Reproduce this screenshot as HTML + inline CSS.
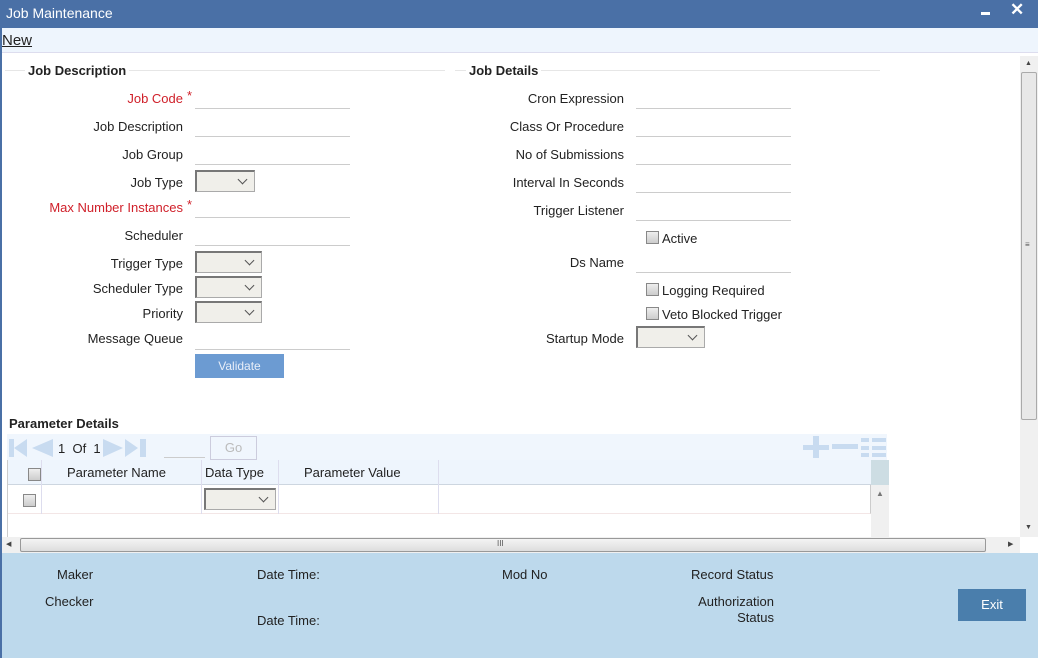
<!DOCTYPE html>
<html><head><style>
*{margin:0;padding:0;box-sizing:border-box}
body{width:1038px;height:658px;overflow:hidden;font-family:"Liberation Sans",Arial,sans-serif;font-size:13px;color:#222;background:#fff;position:relative}
.a{position:absolute}
.lbl{position:absolute;text-align:right;white-space:nowrap}
.red{color:#d0202a}
.fld{position:absolute;height:1px;background:#ccc}
.sel{position:absolute;height:22px;background:#f0efea;border:1px solid #aaa;border-top:2px solid #777;border-left:2px solid #777}
.sel:after{content:"";position:absolute;right:8px;top:4px;width:6px;height:6px;border-right:1.5px solid #555;border-bottom:1.5px solid #555;transform:rotate(45deg)}
.cb{position:absolute;width:13px;height:13px;border:1px solid #888;background:linear-gradient(#eee,#ccc)}
</style></head><body>
<div class="a" style="left:0;top:0;width:1038px;height:28px;background:#4a70a6"></div>
<div class="a" style="left:6px;top:5px;color:#fff;font-size:14px">Job Maintenance</div>
<div class="a" style="left:981px;top:12px;width:9px;height:3px;background:#fff"></div>
<div class="a" style="left:1010px;top:0;color:#fff;font-size:17px;font-weight:bold">✕</div>
<div class="a" style="left:0;top:28px;width:2px;height:630px;background:#4a70a6"></div>
<div class="a" style="left:2px;top:28px;width:1036px;height:25px;background:#eef5fd;border-bottom:1px solid #dde"></div>
<div class="a" style="left:2px;top:32px;font-size:15px;text-decoration:underline">New</div>

<div class="a" style="left:5px;top:70px;width:440px;height:1px;background:#e6e6e6"></div>
<div class="a" style="left:25px;top:63px;background:#fff;padding:0 3px;font-weight:bold;font-size:13px">Job Description</div>
<div class="a" style="left:455px;top:70px;width:425px;height:1px;background:#e6e6e6"></div>
<div class="a" style="left:466px;top:63px;background:#fff;padding:0 3px;font-weight:bold;font-size:13px">Job Details</div>

<div class="lbl red" style="right:855px;top:91px">Job Code</div><div class="a red" style="left:187px;top:88px">*</div>
<div class="fld" style="left:195px;top:108px;width:155px"></div>
<div class="lbl" style="right:855px;top:119px">Job Description</div><div class="fld" style="left:195px;top:136px;width:155px"></div>
<div class="lbl" style="right:855px;top:147px">Job Group</div><div class="fld" style="left:195px;top:164px;width:155px"></div>
<div class="lbl" style="right:855px;top:175px">Job Type</div><div class="sel" style="left:195px;top:170px;width:60px"></div>
<div class="lbl red" style="right:855px;top:200px">Max Number Instances</div><div class="a red" style="left:187px;top:197px">*</div>
<div class="fld" style="left:195px;top:217px;width:155px"></div>
<div class="lbl" style="right:855px;top:228px">Scheduler</div><div class="fld" style="left:195px;top:245px;width:155px"></div>
<div class="lbl" style="right:855px;top:256px">Trigger Type</div><div class="sel" style="left:195px;top:251px;width:67px"></div>
<div class="lbl" style="right:855px;top:281px">Scheduler Type</div><div class="sel" style="left:195px;top:276px;width:67px"></div>
<div class="lbl" style="right:855px;top:306px">Priority</div><div class="sel" style="left:195px;top:301px;width:67px"></div>
<div class="lbl" style="right:855px;top:331px">Message Queue</div><div class="fld" style="left:195px;top:349px;width:155px"></div>
<div class="a" style="left:195px;top:354px;width:89px;height:24px;background:#6c9bd2;color:#e8eef8;text-align:center;line-height:24px;font-size:12px">Validate</div>

<div class="lbl" style="right:414px;top:91px">Cron Expression</div><div class="fld" style="left:636px;top:108px;width:155px"></div>
<div class="lbl" style="right:414px;top:119px">Class Or Procedure</div><div class="fld" style="left:636px;top:136px;width:155px"></div>
<div class="lbl" style="right:414px;top:147px">No of Submissions</div><div class="fld" style="left:636px;top:164px;width:155px"></div>
<div class="lbl" style="right:414px;top:175px">Interval In Seconds</div><div class="fld" style="left:636px;top:192px;width:155px"></div>
<div class="lbl" style="right:414px;top:203px">Trigger Listener</div><div class="fld" style="left:636px;top:220px;width:155px"></div>
<div class="cb" style="left:646px;top:231px"></div><div class="a" style="left:662px;top:231px">Active</div>
<div class="lbl" style="right:414px;top:255px">Ds Name</div><div class="fld" style="left:636px;top:272px;width:155px"></div>
<div class="cb" style="left:646px;top:283px"></div><div class="a" style="left:662px;top:283px">Logging Required</div>
<div class="cb" style="left:646px;top:307px"></div><div class="a" style="left:662px;top:307px">Veto Blocked Trigger</div>
<div class="lbl" style="right:414px;top:331px">Startup Mode</div><div class="sel" style="left:636px;top:326px;width:69px"></div>

<div class="a" style="left:9px;top:416px;font-weight:bold;font-size:13px">Parameter Details</div>
<div class="a" style="left:7px;top:434px;width:880px;height:26px;background:#f0f6fd"></div>
<svg class="a" style="left:7px;top:437px" width="145" height="22"><g fill="#c8dbf0"><rect x="2" y="2" width="5" height="18"/><path d="M7 11L20 2V20Z"/><path d="M25 11L46 2V20Z"/><path d="M96 2L116 11L96 20Z"/><path d="M118 2L131 11L118 20Z"/><rect x="133" y="2" width="6" height="18"/></g></svg>
<div class="a" style="left:58px;top:441px;font-size:13px">1 &nbsp;Of &nbsp;1</div>
<div class="fld" style="left:164px;top:457px;width:41px"></div>
<div class="a" style="left:210px;top:436px;width:47px;height:24px;border:1px solid #ccd;color:#bbb;text-align:center;line-height:22px">Go</div>
<svg class="a" style="left:803px;top:436px" width="85" height="22"><g fill="#c8dbf0"><rect x="0" y="9" width="26" height="5"/><rect x="10" y="0" width="6" height="22"/><rect x="29" y="8" width="26" height="5"/><rect x="58" y="2" width="8" height="4"/><rect x="69" y="2" width="14" height="4"/><rect x="58" y="10" width="8" height="4"/><rect x="69" y="10" width="14" height="4"/><rect x="58" y="17" width="8" height="4"/><rect x="69" y="17" width="14" height="4"/></g></svg>
<div class="a" style="left:7px;top:460px;width:864px;height:25px;background:#eef5fd;border-bottom:1px solid #cdd6e0"></div>
<div class="a" style="left:871px;top:460px;width:18px;height:25px;background:#cddde3"></div>
<div class="a" style="left:871px;top:485px;width:18px;height:52px;background:#f0f0f0"></div>
<div class="a" style="left:876px;top:489px;font-size:8px;color:#777">▲</div>
<div class="a" style="left:7px;top:485px;width:864px;height:29px;border-bottom:1px solid #f3e6e6;border-right:1px solid #ccc"></div>
<div class="a" style="left:41px;top:460px;width:1px;height:54px;background:#dde"></div>
<div class="a" style="left:201px;top:460px;width:1px;height:54px;background:#dde"></div>
<div class="a" style="left:278px;top:460px;width:1px;height:54px;background:#dde"></div>
<div class="a" style="left:438px;top:460px;width:1px;height:54px;background:#dde"></div>
<div class="a" style="left:7px;top:460px;width:1px;height:77px;background:#ccc"></div>
<div class="cb" style="left:28px;top:468px"></div>
<div class="a" style="left:67px;top:465px">Parameter Name</div>
<div class="a" style="left:205px;top:465px">Data Type</div>
<div class="a" style="left:304px;top:465px">Parameter Value</div>
<div class="cb" style="left:23px;top:494px"></div>
<div class="sel" style="left:204px;top:488px;width:72px"></div>

<div class="a" style="left:1020px;top:56px;width:18px;height:481px;background:#f0f0f0"></div>
<div class="a" style="left:1021px;top:72px;width:16px;height:348px;background:#e8e8e8;border:1px solid #aaa;border-radius:2px"></div>
<div class="a" style="left:1025px;top:60px;font-size:7px;color:#444">▲</div>
<div class="a" style="left:1025px;top:524px;font-size:7px;color:#444">▼</div>
<div class="a" style="left:1025px;top:240px;font-size:8px;color:#555">≡</div>
<div class="a" style="left:2px;top:537px;width:1018px;height:16px;background:#f0f0f0"></div>
<div class="a" style="left:20px;top:538px;width:966px;height:14px;background:linear-gradient(#f4f4f4,#ddd);border:1px solid #999;border-radius:2px"></div>
<div class="a" style="left:6px;top:540px;font-size:7px;color:#444">◀</div>
<div class="a" style="left:1008px;top:540px;font-size:7px;color:#444">▶</div>
<div class="a" style="left:497px;top:539px;font-size:8px;color:#555">III</div>

<div class="a" style="left:2px;top:553px;width:1036px;height:105px;background:#bdd9ec"></div>
<div class="a" style="left:57px;top:567px">Maker</div>
<div class="a" style="left:45px;top:594px">Checker</div>
<div class="a" style="left:257px;top:567px">Date Time:</div>
<div class="a" style="left:257px;top:613px">Date Time:</div>
<div class="a" style="left:502px;top:567px">Mod No</div>
<div class="a" style="left:691px;top:567px">Record Status</div>
<div class="lbl" style="right:264px;top:594px;line-height:16px">Authorization<br>Status</div>
<div class="a" style="left:958px;top:589px;width:68px;height:32px;background:#4a7eac;color:#fff;text-align:center;line-height:32px;font-size:13px">Exit</div>
</body></html>
